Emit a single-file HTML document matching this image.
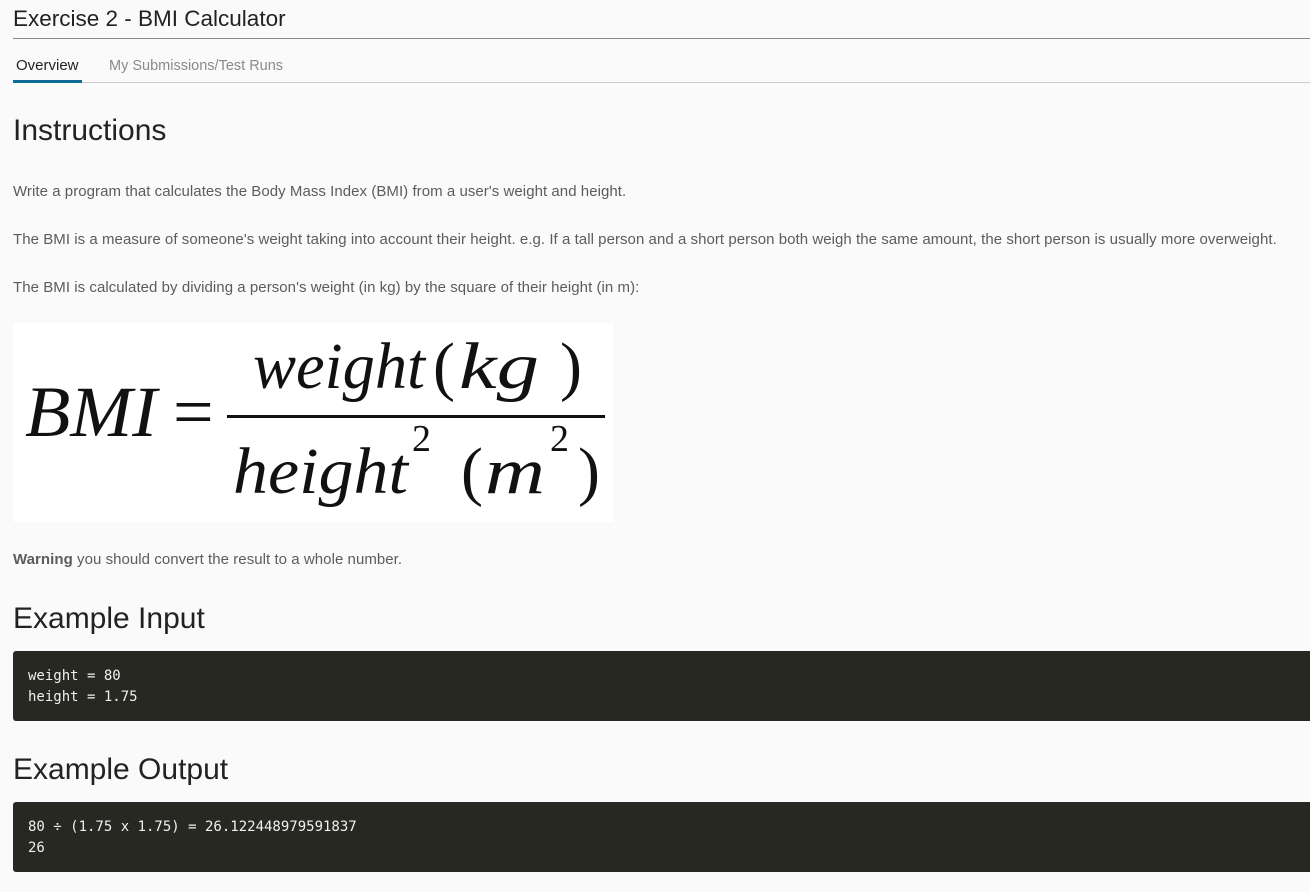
<!DOCTYPE html>
<html><head><meta charset="utf-8"><style>
body{margin:0;background:#fafafa;font-family:"Liberation Sans",sans-serif;width:1310px;height:892px;overflow:hidden;position:relative}
.a{position:absolute;white-space:nowrap}
.p{font-size:15px;letter-spacing:0.05px;color:#5c5c5c}
h{font-size:30px;color:#222;position:absolute;white-space:nowrap}
.code{position:absolute;left:13px;width:1310px;background:#272822;border-radius:3px;color:#f0f0f0;font-family:"DejaVu Sans Mono","Liberation Mono",monospace;font-size:14px;line-height:21px;padding-left:15px;box-sizing:border-box}
</style></head><body>
<div class="a" style="left:13px;top:6px;font-size:22.5px;color:#222">Exercise 2 - BMI Calculator</div>
<div class="a" style="left:13px;top:38px;width:1297px;height:1px;background:#8a8a8a"></div>
<div class="a" style="left:16px;top:57px;font-size:15px;color:#222">Overview</div>
<div class="a" style="left:109px;top:58px;font-size:14.5px;color:#8a8a8a">My Submissions/Test Runs</div>
<div class="a" style="left:13px;top:82px;width:1297px;height:1px;background:#ccc"></div>
<div class="a" style="left:13px;top:80px;width:69px;height:3px;background:#0f6a9a"></div>
<h style="left:13px;top:114px">Instructions</h>
<div class="a p" style="left:13px;top:183px">Write a program that calculates the Body Mass Index (BMI) from a user's weight and height.</div>
<div class="a p" style="left:13px;top:231px">The BMI is a measure of someone's weight taking into account their height. e.g. If a tall person and a short person both weigh the same amount, the short person is usually more overweight.</div>
<div class="a p" style="left:13px;top:279px">The BMI is calculated by dividing a person's weight (in kg) by the square of their height (in m):</div>
<svg class="a" style="left:13px;top:323px" width="600" height="199">
<rect width="600" height="199" fill="#fff"/>
<g font-family="Liberation Serif,serif" fill="#111">
<text x="12" y="113" font-size="72" font-style="italic" textLength="132" lengthAdjust="spacingAndGlyphs">BMI</text>
<text x="160" y="113" font-size="72">=</text>
<text x="240" y="65" font-size="66" font-style="italic" textLength="172" lengthAdjust="spacingAndGlyphs">weight</text>
<text x="420" y="65" font-size="66">(</text><text x="446" y="65" font-size="66" font-style="italic" textLength="80" lengthAdjust="spacingAndGlyphs">kg</text><text x="547" y="65" font-size="66">)</text>
<rect x="214" y="92" width="378" height="3"/>
<text x="220" y="170" font-size="66" font-style="italic" textLength="175" lengthAdjust="spacingAndGlyphs">height</text>
<text x="399" y="128" font-size="38">2</text>
<text x="448" y="170" font-size="66">(</text><text x="472" y="170" font-size="66" font-style="italic" textLength="60" lengthAdjust="spacingAndGlyphs">m</text>
<text x="537" y="128" font-size="38">2</text><text x="565" y="170" font-size="66">)</text>
</g></svg>
<div class="a p" style="left:13px;top:551px"><b>Warning</b> you should convert the result to a whole number.</div>
<h style="left:13px;top:602px">Example Input</h>
<div class="code" style="top:651px;height:70px;padding-top:15px">weight = 80<br>height = 1.75</div>
<h style="left:13px;top:753px">Example Output</h>
<div class="code" style="top:802px;height:70px;padding-top:15px">80 ÷ (1.75 x 1.75) = 26.122448979591837<br>26</div>
</body></html>
